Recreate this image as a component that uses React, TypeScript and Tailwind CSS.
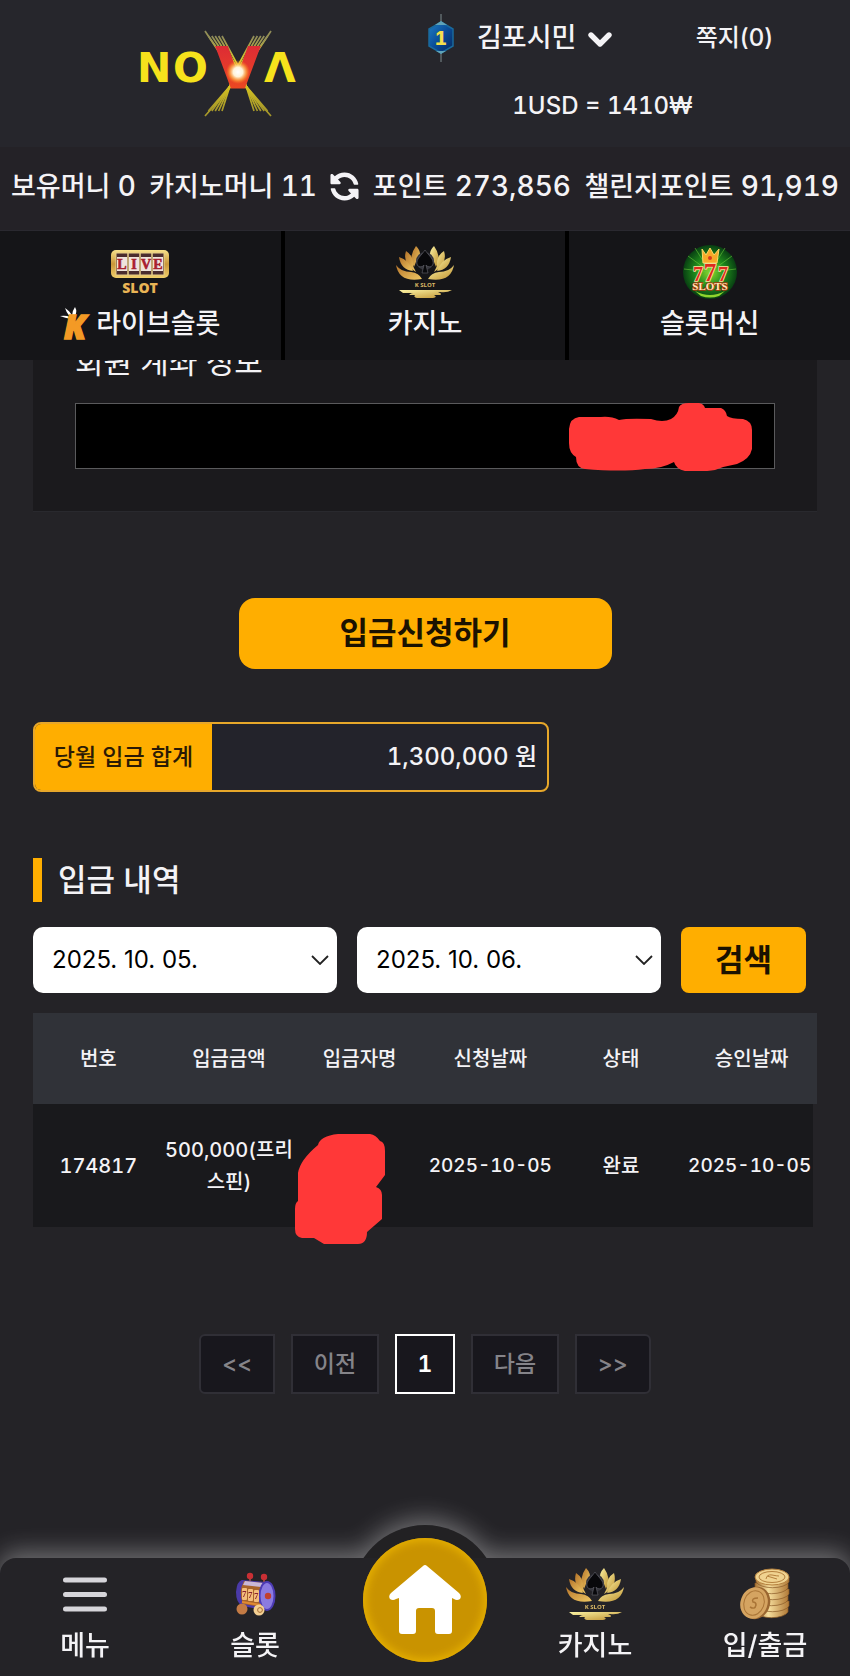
import { FaChevronDown } from "react-icons/fa6";
import { FaSyncAlt } from "react-icons/fa";

const RAYS = [0, 1, 2, 3, 4, 5];

function NovaLogo() {
  return (
    <svg viewBox="0 0 164 88" className="h-[88px] w-[164px]" role="img" aria-label="NOVA">
      <defs>
        <linearGradient id="ray" x1="0" y1="0" x2="0" y2="1">
          <stop offset="0" stopColor="#8d8a5a" />
          <stop offset="0.45" stopColor="#f6e21c" />
          <stop offset="1" stopColor="#a3952a" />
        </linearGradient>
        <linearGradient id="novaV" x1="0" y1="0" x2="0" y2="1">
          <stop offset="0" stopColor="#d9243a" />
          <stop offset="1" stopColor="#f0501c" />
        </linearGradient>
        <radialGradient id="flare">
          <stop offset="0" stopColor="#fff" />
          <stop offset="0.4" stopColor="#fff3d8" />
          <stop offset="0.7" stopColor="#ffb347" stopOpacity="0.7" />
          <stop offset="1" stopColor="#ff7a1c" stopOpacity="0" />
        </radialGradient>
      </defs>
      <g stroke="url(#ray)" strokeWidth="1.7" fill="none">
        {RAYS.map((i) => (
          <path key={i} d={`M${68 + i * 3.4} ${1 + (i ? 5 : 0)} L${96 + i * 1.8} 43 L${134 - i * 3.4} ${86 - (i ? 5 : 0)}`} />
        ))}
        {RAYS.map((i) => (
          <path key={i} d={`M${134 - i * 3.4} ${1 + (i ? 5 : 0)} L${106 - i * 1.8} 43 L${68 + i * 3.4} ${86 - (i ? 5 : 0)}`} />
        ))}
      </g>
      <g fill="#f6e21c" fontFamily="DejaVu Sans" fontWeight="700" fontSize="41">
        <text x="0" y="52">N</text>
        <text x="36" y="52">O</text>
        <text x="127" y="52">Λ</text>
      </g>
      <text x="101" y="57" textAnchor="middle" fill="url(#novaV)" stroke="url(#novaV)" strokeWidth="2" fontFamily="DejaVu Sans" fontWeight="700" fontSize="56">V</text>
      <circle cx="101" cy="42" r="12" fill="url(#flare)" />
    </svg>
  );
}

function LevelBadge() {
  return (
    <svg viewBox="0 0 28 48" className="h-12 w-7" aria-hidden="true">
      <defs>
        <linearGradient id="badge" x1="0" y1="0" x2="1" y2="1">
          <stop offset="0" stopColor="#1f7fc4" />
          <stop offset="0.5" stopColor="#0a4c99" />
          <stop offset="1" stopColor="#06285e" />
        </linearGradient>
      </defs>
      <path d="M14 0v48" stroke="#7c8b8e" strokeWidth="1" />
      <path d="M14 8 L26 15 V32 L14 39 L2 32 V15Z" fill="url(#badge)" stroke="#1a6a9c" strokeWidth="1.5" />
      <path d="M14 7 L20 11 H8Z M14 40 L19 37 H9Z" fill="#5fa3b8" />
      <text x="14" y="31" textAnchor="middle" fontFamily="Inter" fontWeight="800" fontSize="19" fill="#f5df4d">1</text>
    </svg>
  );
}

function LiveSlotIcon() {
  return (
    <svg viewBox="0 0 60 46" className="h-[46px] w-[60px]" aria-hidden="true">
      <defs>
        <linearGradient id="goldV" x1="0" y1="0" x2="0" y2="1">
          <stop offset="0" stopColor="#f7e08a" />
          <stop offset="0.5" stopColor="#c9973a" />
          <stop offset="1" stopColor="#f1cf6c" />
        </linearGradient>
      </defs>
      <rect x="1" y="1" width="58" height="28" rx="5" fill="url(#goldV)" />
      <rect x="6" y="4" width="48" height="22" fill="#4a2c2e" />
      {[0, 1, 2, 3].map((i) => (
        <g key={i}>
          <rect x={6 + i * 12} y="4" width="12" height="22" fill="none" stroke="#e8cf8c" strokeWidth="1" />
          <rect x={7 + i * 12} y="8" width="10" height="14" fill="#efe4dc" />
        </g>
      ))}
      <g fontFamily="Liberation Serif" fontWeight="700" fontSize="14" fill="#a8202f" stroke="#a8202f" strokeWidth="0.6" textAnchor="middle">
        <text x="12" y="20">L</text>
        <text x="24" y="20">I</text>
        <text x="36" y="20">V</text>
        <text x="48" y="20">E</text>
      </g>
      <text x="30" y="44" textAnchor="middle" fontFamily="Open Sans" fontWeight="800" fontSize="14" fill="#e9b455">SLOT</text>
    </svg>
  );
}

function LotusIcon() {
  return (
    <svg viewBox="0 0 60 52" className="h-[52px] w-[60px]" aria-hidden="true">
      <defs>
        <linearGradient id="petalL" x1="0" y1="0" x2="1" y2="1">
          <stop offset="0" stopColor="#b5742a" />
          <stop offset="1" stopColor="#f0c863" />
        </linearGradient>
        <linearGradient id="petalR" x1="0" y1="0" x2="1" y2="1">
          <stop offset="0" stopColor="#fbf3a4" />
          <stop offset="1" stopColor="#bf9130" />
        </linearGradient>
      </defs>
      <g fill="url(#petalL)">
        <path d="M21 0 Q27 6 24 12 Q20 16 19 21 Q13 11 21 0Z" />
        <path d="M11 5 Q19 10 18 20 L21 26 Q7 18 11 5Z" />
        <path d="M4 11 Q14 14 18 25 Q6 24 4 11Z" />
        <path d="M1 19 Q6 26 16 26 Q24 27 27 33 Q4 37 1 19Z" />
      </g>
      <g fill="url(#petalR)">
        <path d="M39 0 Q33 6 36 12 Q40 16 41 21 Q47 11 39 0Z" />
        <path d="M49 5 Q41 10 42 20 L39 26 Q53 18 49 5Z" />
        <path d="M56 11 Q46 14 42 25 Q54 24 56 11Z" />
        <path d="M59 19 Q54 26 44 26 Q36 27 33 33 Q56 37 59 19Z" />
      </g>
      <circle cx="30" cy="15" r="9" fill="#34343b" />
      <path d="M30 4 C34 10 39 13 38 18 C37 22 32 21 31 19 L33 27 H27 L29 19 C28 21 23 22 22 18 C21 13 26 10 30 4Z" fill="#08080b" stroke="#75757f" strokeWidth="0.5" />
      <text x="30" y="41" textAnchor="middle" fontFamily="Open Sans" fontWeight="700" fontSize="6" fill="#d8b765">K SLOT</text>
      <path d="M4 44 H57 Q52 47 45 46 H43 Q48 48 45 49 H39 Q43 51 38 52 H22 Q18 51 20 49 H14 Q16 47 18 47 H8Z" fill="url(#petalR)" />
    </svg>
  );
}

function SevensIcon() {
  return (
    <svg viewBox="0 0 54 54" className="size-[54px]" aria-hidden="true">
      <defs>
        <radialGradient id="green">
          <stop offset="0" stopColor="#8ddb2f" />
          <stop offset="0.55" stopColor="#1f8a1c" />
          <stop offset="1" stopColor="#083f12" />
        </radialGradient>
      </defs>
      <circle cx="27" cy="27" r="27" fill="url(#green)" />
      <path d="M27 27 L5 11 M27 27 L49 11 M27 27 L1 24 M27 27 L53 24 M27 27 L12 3 M27 27 L42 3" stroke="#69c93a" strokeWidth="1" opacity="0.6" />
      <path d="M19 4 L23 10 L27 3 L31 10 L36 4 L34 18 H20Z" fill="#f7a928" stroke="#ffd766" />
      <circle cx="27" cy="13" r="2" fill="#d53a1c" />
      <path d="M12 46 Q27 54 42 46 L36 51 Q27 54 18 51Z" fill="#8fd52e" />
      <g fontFamily="Liberation Serif" fontWeight="700" fill="#dd2a1c" stroke="#ffe2a1" strokeWidth="1.6" paintOrder="stroke" textAnchor="middle">
        <text x="15" y="36" fontSize="20">7</text>
        <text x="40" y="36" fontSize="20">7</text>
        <text x="27" y="36" fontSize="25">7</text>
      </g>
      <text x="27" y="45" textAnchor="middle" fontFamily="Liberation Serif" fontWeight="700" fontSize="11" fill="#ffe8b8" stroke="#a6380f" strokeWidth="1.5" paintOrder="stroke">SLOTS</text>
    </svg>
  );
}

function KMark() {
  return (
    <svg viewBox="0 0 32 34" className="h-[34px] w-8 overflow-visible" aria-hidden="true">
      <path d="M11 12 Q5 11 0 9 Q6 8 10 10 Q6 5 5 1 Q10 4 12 9 Q12 4 15 0 Q18 5 14 11Z" fill="#fff" />
      <text x="4" y="32" fontFamily="Open Sans" fontWeight="800" fontStyle="italic" fontSize="33" fill="#f39a25" stroke="#f39a25" strokeWidth="1.5">K</text>
    </svg>
  );
}

function SlotMachineIcon() {
  return (
    <svg viewBox="0 0 42 44" className="h-11 w-[42px]" aria-hidden="true">
      <path d="M16 4v8M30 5v8" stroke="#8f4a3c" strokeWidth="2" />
      <circle cx="16" cy="4" r="3.2" fill="#c92f34" />
      <circle cx="30" cy="5" r="3.2" fill="#c92f34" />
      <path d="M8 8 L32 10 L30 38 L8 34 Q2 30 2 20 Q3 9 8 8Z" fill="#4a3aa8" />
      <path d="M10 9 L29 11 Q24 22 28 35 L9 32 Q4 20 10 9Z" fill="#a8642b" />
      <path d="M11 9 L29 11 L27 15 L9 13Z" fill="#c9b8d8" />
      <ellipse cx="33" cy="24" rx="7.5" ry="14" fill="#8b7be0" stroke="#4c3bb4" strokeWidth="2" />
      <circle cx="34" cy="24" r="3.2" fill="#c2402e" />
      {[0, 1, 2].map((i) => (
        <rect key={i} x={8 + i * 6} y={16 + i} width="5" height="12" rx="1" fill="#f3bd7c" />
      ))}
      <g fontFamily="Liberation Serif" fontWeight="700" fontSize="9" fill="#8a2430">
        <text x="8" y="25">7</text>
        <text x="14" y="26">7</text>
        <text x="20" y="27">7</text>
      </g>
      <path d="M8 30 L27 33" stroke="#e08a32" strokeWidth="2" />
      <circle cx="8" cy="37" r="5.5" fill="#c47b45" />
      <circle cx="25" cy="38" r="5.5" fill="#f3cf92" />
      <circle cx="26" cy="38" r="2.4" fill="none" stroke="#a86c34" />
    </svg>
  );
}

function CoinsIcon() {
  return (
    <svg viewBox="0 0 52 52" className="size-[52px]" aria-hidden="true">
      <defs>
        <linearGradient id="coin" x1="0" y1="0" x2="1" y2="0">
          <stop offset="0" stopColor="#a97436" />
          <stop offset="0.4" stopColor="#f5dd9c" />
          <stop offset="1" stopColor="#b17a38" />
        </linearGradient>
      </defs>
      {[42, 36, 30, 24, 18, 12].map((y, i) => (
        <path key={y} d={`M${16 + (i % 2)} ${y - 3} v5 a17 7.5 0 0 0 33 0 v-5Z`} fill="url(#coin)" stroke="#8a5a26" strokeWidth="0.7" />
      ))}
      <ellipse cx="33" cy="9" rx="17" ry="8" fill="#f0d390" stroke="#b5813e" />
      <ellipse cx="33" cy="9" rx="13" ry="5.5" fill="none" stroke="#b5813e" />
      <path d="M27 11 Q28 6 33 7 T40 8 M28 8 L38 11" stroke="#b5813e" fill="none" />
      <ellipse cx="17" cy="35" rx="14" ry="16.5" transform="rotate(20 17 35)" fill="#9a6630" />
      <ellipse cx="15" cy="35" rx="13.5" ry="16" transform="rotate(20 15 35)" fill="#d5a461" />
      <ellipse cx="15" cy="35" rx="10" ry="12.5" transform="rotate(20 15 35)" fill="none" stroke="#a97436" />
      <path d="M11 39 Q16 42 17 37 Q17 34 14 34 Q12 30 19 30" stroke="#a97436" strokeWidth="1.5" fill="none" />
    </svg>
  );
}

function MenuIcon() {
  return (
    <svg viewBox="0 0 44 36" className="h-9 w-11" stroke="#d6d5da" strokeWidth="5" strokeLinecap="round" aria-hidden="true">
      <path d="M2.5 4h39M2.5 18.500h39M2.5 33h39" />
    </svg>
  );
}

function Balance({ label, value }: { label: string; value: string }) {
  return (
    <span>
      {label} <span className="text-[28px]">{value}</span>
    </span>
  );
}

function DateSelect({ id, label, value }: { id: string; label: string; value: string }) {
  return (
    <div className="relative flex-1">
      <label htmlFor={id} className="sr-only">{label}</label>
      <select id={id} className="h-[66px] w-full appearance-none rounded-[10px] bg-white pl-[19px] pr-10 text-2xl font-normal text-black">
        <option>{value}</option>
      </select>
      <svg viewBox="0 0 18 10" className="pointer-events-none absolute right-2 top-7 h-[10px] w-[18px]" fill="none" stroke="#222" strokeWidth="1.8" aria-hidden="true">
        <path d="M1 1 L9 9 L17 1" />
      </svg>
    </div>
  );
}

const tabs = [
  { label: "라이브슬롯", icon: <LiveSlotIcon />, mark: <KMark /> },
  { label: "카지노", icon: <LotusIcon /> },
  { label: "슬롯머신", icon: <SevensIcon /> },
];

const columns = ["번호", "입금금액", "입금자명", "신청날짜", "상태", "승인날짜"];

const rows = [
  { no: "174817", amount: "500,000(프리스핀)", applied: "2025-10-05", status: "완료", approved: "2025-10-05" },
];

const pages = [
  { label: "<<", style: "w-[76px] rounded-l-md border-[#302f36] text-[#858489]" },
  { label: "이전", style: "w-[88px] border-[#302f36] text-[#858489]" },
  { label: "1", style: "w-[60px] border-white font-semibold text-white" },
  { label: "다음", style: "w-[88px] border-[#302f36] text-[#858489]" },
  { label: ">>", style: "w-[76px] rounded-r-md border-[#302f36] text-[#858489]" },
];

const bottomLeft = [
  { label: "메뉴", icon: <MenuIcon /> },
  { label: "슬롯", icon: <SlotMachineIcon /> },
];

const bottomRight = [
  { label: "카지노", icon: <LotusIcon /> },
  { label: "입/출금", icon: <CoinsIcon /> },
];

function BottomItem({ label, icon }: { label: string; icon: React.ReactNode }) {
  return (
    <a href="#" className="flex flex-1 flex-col items-center pt-2">
      <span className="flex h-14 items-center">{icon}</span>
      <span className="mt-1 text-[27px] leading-10">{label}</span>
    </a>
  );
}

export default function App() {
  return (
    <div className="flex min-h-screen flex-col bg-[#242327] font-['Inter','Noto_Sans_CJK_KR',sans-serif] font-medium tabular-nums text-[#f4f3f6]">
      <header className="relative z-10">
        <div className="grid h-[147px] grid-cols-2 bg-[#26262c]">
          <div className="flex items-center justify-center pl-3">
            <NovaLogo />
          </div>
          <div>
            <div className="flex h-[76px] items-center justify-between pr-[77px] pl-[2px]">
              <button className="flex items-center text-[27px]">
                <LevelBadge />
                <span className="ml-[22px]">김포시민</span>
                <FaChevronDown className="ml-3 size-6 stroke-current stroke-[50]" />
              </button>
              <a href="#" className="text-2xl proportional-nums">쪽지(0)</a>
            </div>
            <p className="pr-[70px] text-center text-2xl leading-[60px]">1USD = 1410₩</p>
          </div>
        </div>

        <div className="flex h-[84px] items-center justify-between whitespace-nowrap border-b border-[#2a2930] bg-[#242227] px-[11px] pb-1 text-[27px]">
          <Balance label="보유머니" value="0" />
          <Balance label="카지노머니" value="11" />
          <button aria-label="새로고침"><FaSyncAlt className="size-[29px] -scale-x-100" /></button>
          <Balance label="포인트" value="273,856" />
          <Balance label="챌린지포인트" value="91,919" />
        </div>

        <nav className="grid grid-cols-3 gap-1 bg-black">
          {tabs.map((tab) => (
            <a key={tab.label} href="#" className="flex h-[129px] flex-col items-center bg-[#151518] pt-3">
              <span className="flex h-[58px] items-center">{tab.icon}</span>
              <span className="flex items-center gap-1 text-[27px] leading-[46px]">
                {tab.mark}
                {tab.label}
              </span>
            </a>
          ))}
        </nav>
      </header>

      <main className="flex-1 px-[33px]">
        <section className="-mt-5 border-b border-[#29292e] bg-[#1b1a1d] px-[42px] pb-[42px]">
          <label htmlFor="account" className="block text-[31px] font-normal leading-[44px]">회원 계좌 정보</label>
          <div className="relative mt-[19px]">
            <input id="account" readOnly className="block h-[66px] w-full border border-[#5a5a5c] bg-black px-4" />
            <svg viewBox="0 0 186 68" className="absolute right-[22px] top-0 h-[68px] w-[186px]" aria-hidden="true">
              <path d="M2 26 Q3 15 12 14 H34 Q44 13 52 17 Q60 15 84 16 Q96 20 104 16 Q111 12 112 4 Q114 0 122 0 H132 Q137 1 138 5 H154 Q159 7 160 13 Q164 16 176 16 Q185 18 185 27 V46 Q183 56 170 61 Q158 63 148 67 Q138 69 118 68 Q109 66 107 59 Q94 66 78 66 Q54 69 18 66 Q9 65 9 54 Q2 50 2 40Z" fill="#ff3838" />
            </svg>
          </div>
        </section>

        <div className="mt-[86px] flex justify-center">
          <button className="h-[71px] w-[373px] rounded-2xl bg-[#ffae00] text-[31px] font-bold text-[#1b1200]">입금신청하기</button>
        </div>

        <dl className="mt-[53px] flex h-[70px] w-[516px] overflow-hidden rounded-lg border-2 border-[#e7a72a] bg-[#23232b]">
          <dt className="flex w-[177px] items-center justify-center bg-[#ffae00] text-[23px] text-[#2a1a05]">당월 입금 합계</dt>
          <dd className="flex flex-1 items-center justify-end pr-[10px] text-2xl">1,300,000 원</dd>
        </dl>

        <h2 className="mt-[66px] border-l-[9px] border-[#ffae00] pl-4 text-[31px] leading-[44px]">입금 내역</h2>

        <form className="mt-[25px] flex gap-5 pr-[11px] proportional-nums" onSubmit={(e) => e.preventDefault()}>
          <DateSelect id="from" label="시작일" value="2025. 10. 05." />
          <DateSelect id="to" label="종료일" value="2025. 10. 06." />
          <button className="h-[66px] w-[125px] rounded-lg bg-[#ffae00] text-[31px] font-bold text-[#1b1200]">검색</button>
        </form>

        <div className="relative mt-5">
          <table className="w-full table-fixed border-separate border-spacing-0 text-center">
            <thead className="bg-[#303238] text-xl">
              <tr>
                {columns.map((name) => (
                  <th key={name} className="h-[91px] font-medium">{name}</th>
                ))}
              </tr>
            </thead>
            <tbody className="bg-[#19191c] text-xl leading-8">
              {rows.map((row) => (
                <tr key={row.no}>
                  <td className="h-[123px]">{row.no}</td>
                  <td>{row.amount}</td>
                  <td />
                  <td className="whitespace-nowrap text-[19px]">{row.applied}</td>
                  <td>{row.status}</td>
                  <td className="whitespace-nowrap border-r-4 border-[#242327] text-[19px]">{row.approved}</td>
                </tr>
              ))}
            </tbody>
          </table>
          <svg viewBox="0 0 92 112" className="absolute left-1/3 top-[120px] h-28 w-[92px]" aria-hidden="true">
            <path d="M24 12 Q26 3 44 1 H76 Q82 2 86 8 Q91 9 91 18 V42 L82 54 Q88 56 88 62 V86 L73 99 Q73 111 64 111 H30 L20 105 H8 Q1 104 1 96 V76 Q1 70 4 68 V40 Q6 27 24 12Z" fill="#ff3838" />
          </svg>
        </div>

        <nav className="mt-[107px] mb-20 flex justify-center gap-4">
          {pages.map((page) => (
            <button key={page.label} className={`h-[60px] border-2 bg-[#18171d] text-[23px] ${page.style}`}>{page.label}</button>
          ))}
        </nav>
      </main>

      <nav className="relative drop-shadow-[0_-6px_12px_rgba(255,255,255,0.35)]">
        <div className="absolute left-1/2 -top-[33px] size-[148px] -translate-x-1/2 rounded-full bg-[#222123]" />
        <div className="relative flex h-[118px] rounded-t-2xl bg-[#242327]">
          {bottomLeft.map((item) => (
            <BottomItem key={item.label} {...item} />
          ))}
          <div className="flex flex-1 justify-center">
            <a href="#" aria-label="홈" className="-mt-5 flex size-[124px] items-center justify-center rounded-full bg-[#c99300] shadow-[inset_0_0_8px_3px_#e6b000]">
              <svg viewBox="0 0 72 70" className="h-[70px] w-[72px]" fill="#fff" aria-hidden="true">
                <path d="M34 1 Q36 -1 38 1 L70 28 Q73 31 71 34 Q68 36 65 34 L63 33 V66 Q63 69 60 69 H49 Q46 69 46 66 V46 Q46 43 43 43 H30 Q27 43 27 46 V66 Q27 69 24 69 H13 Q10 69 10 66 V33 L7 34 Q4 36 1 34 Q-1 31 2 28Z" />
              </svg>
            </a>
          </div>
          {bottomRight.map((item) => (
            <BottomItem key={item.label} {...item} />
          ))}
        </div>
      </nav>
    </div>
  );
}
